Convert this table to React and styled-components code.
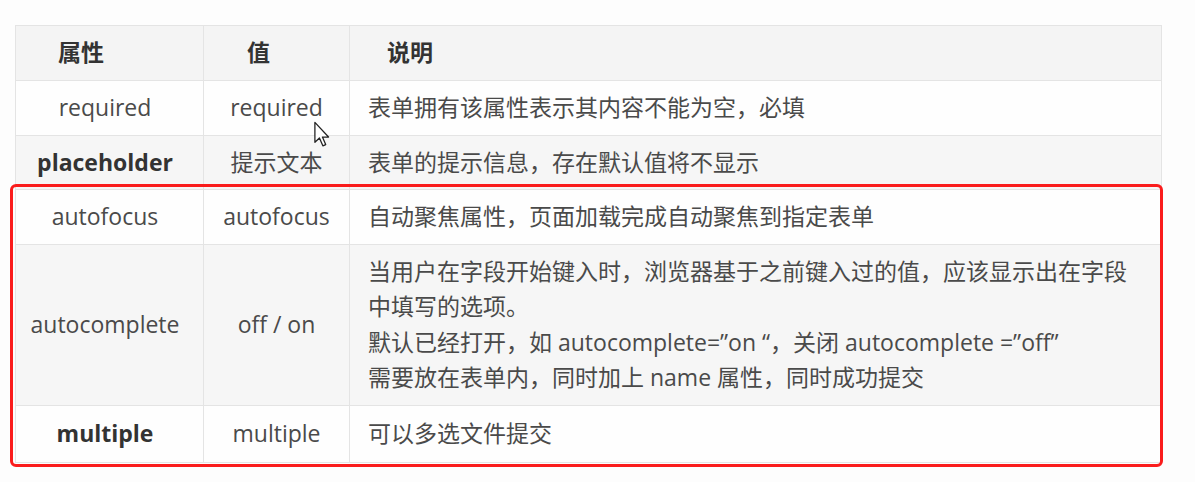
import React from 'react';
import styled, { createGlobalStyle } from 'styled-components';

const GlobalStyle = createGlobalStyle`
  html, body {
    margin: 0;
    padding: 0;
    background: #fdfdfd;
  }
  body {
    font-family: 'Open Sans', 'Noto Sans CJK SC', sans-serif;
    color: #444;
  }
`;

const rows = [
  { name: 'required', value: 'required', desc: ['表单拥有该属性表示其内容不能为空，必填'] },
  { name: 'placeholder', bold: true, value: '提示文本', desc: ['表单的提示信息，存在默认值将不显示'] },
  { name: 'autofocus', value: 'autofocus', desc: ['自动聚焦属性，页面加载完成自动聚焦到指定表单'] },
  {
    name: 'autocomplete',
    value: 'off / on',
    desc: [
      '当用户在字段开始键入时，浏览器基于之前键入过的值，应该显示出在字段',
      '中填写的选项。',
      '默认已经打开，如 autocomplete=”on “，关闭 autocomplete =”off”',
      '需要放在表单内，同时加上 name 属性，同时成功提交',
    ],
  },
  { name: 'multiple', bold: true, value: 'multiple', desc: ['可以多选文件提交'], tall: true },
];

const App = () => {
  return (
    <Page>
      <GlobalStyle />
      <Frame>
        <Table>
          <colgroup>
            <col style={{ width: 188 }} />
            <col style={{ width: 146 }} />
            <col />
          </colgroup>
          <thead>
            <tr>
              <HeadCell $pad={42}>属性</HeadCell>
              <HeadCell $pad={43}>值</HeadCell>
              <HeadCell $pad={37}>说明</HeadCell>
            </tr>
          </thead>
          <tbody>
            {rows.map((row, i) => (
              <Row key={row.name} $shaded={i % 2 === 1} $tall={row.tall}>
                <NameCell $bold={row.bold}>{row.name}</NameCell>
                <ValueCell>{row.value}</ValueCell>
                <DescCell>
                  {row.desc.map((line) => (
                    <Line key={line}>{line}</Line>
                  ))}
                </DescCell>
              </Row>
            ))}
          </tbody>
        </Table>

        <Highlight />

        <Cursor viewBox="0 0 12 19" width="18" height="27">
          <path
            d="M1 1 L1 15 L4.2 12 L6.6 17.5 L8.6 16.6 L6.3 11.3 L10.6 11.3 Z"
            fill="#fff"
            stroke="#222"
            strokeWidth="0.9"
            strokeLinejoin="round"
          />
        </Cursor>
      </Frame>
    </Page>
  );
};

const Page = styled.div`
  width: 1195px;
  height: 482px;
  padding: 25px 0 0 15px;
  box-sizing: border-box;
  overflow: hidden;
`;

const Frame = styled.div`
  position: relative;
  width: 1147px;
`;

const Table = styled.table`
  width: 100%;
  border-collapse: collapse;
  table-layout: fixed;
  font-size: 23px;
  line-height: 35.5px;

  td,
  th {
    border: 1px solid #e4e4e4;
  }
`;

const HeadCell = styled.th`
  background: #f4f4f4;
  color: #333;
  font-weight: 700;
  text-align: left;
  height: 54px;
  padding: 0 0 0 ${(p) => p.$pad}px;
`;

const Row = styled.tr`
  background: ${(p) => (p.$shaded ? '#f6f6f6' : '#fefefe')};
  height: ${(p) => (p.$tall ? '57px' : 'auto')};
`;

const NameCell = styled.td`
  text-align: center;
  padding: 9px 9px 9px 0;
  font-weight: ${(p) => (p.$bold ? 700 : 400)};
  color: ${(p) => (p.$bold ? '#333' : '#4a4a4a')};
`;

const ValueCell = styled.td`
  text-align: center;
  padding: 9px 4px;
  color: #4a4a4a;
`;

const DescCell = styled.td`
  padding: 9px 16px 9px 18px;
  color: #4a4a4a;
`;

const Line = styled.div`
  white-space: nowrap;
`;

const Highlight = styled.div`
  position: absolute;
  left: -5px;
  top: 159px;
  width: 1153px;
  height: 283px;
  box-sizing: border-box;
  border: 3px solid #fa1c1c;
  border-radius: 6px;
  pointer-events: none;
`;

const Cursor = styled.svg`
  position: absolute;
  left: 298px;
  top: 96px;
`;

export default App;
